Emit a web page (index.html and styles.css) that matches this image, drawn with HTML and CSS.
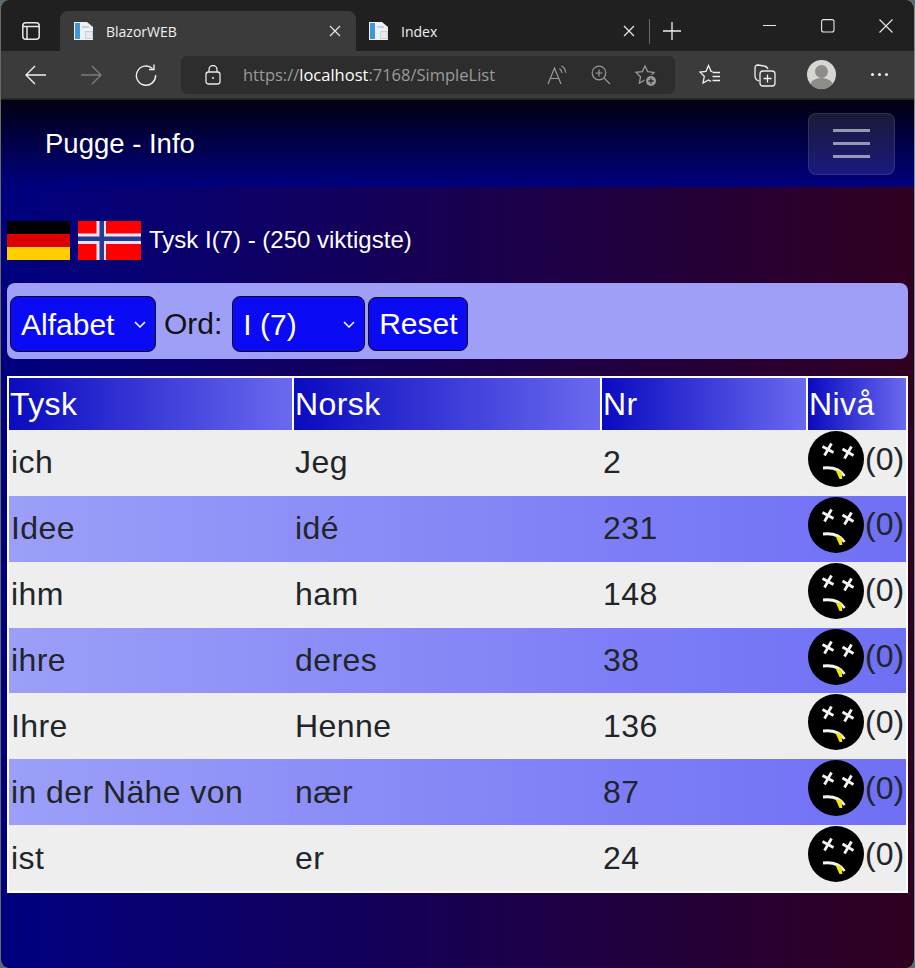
FILE: index.html
```html
<!DOCTYPE html>
<html lang="no">
<head>
<meta charset="utf-8">
<title>BlazorWEB</title>
<link rel="stylesheet" href="styles.css">
</head>
<body>
<svg class="defs" width="0" height="0" aria-hidden="true">
  <symbol id="face" viewBox="0 0 56 56">
    <circle cx="28" cy="28" r="28" fill="#000"/>
    <path d="M14.500 15.500l11 6M23.500 12.500l-7 12M34.500 18l11 6.500M43.500 15.500l-7 12" stroke="#f4f4f4" stroke-width="2.800" fill="none"/>
    <path d="M15 37c9-1 17 1 21.500 8" stroke="#f4f4f4" stroke-width="2.800" fill="none"/>
    <path d="M27.500 39l6 1.500 .8 7.500h-2.800z" fill="#f5e60a"/>
  </symbol>
  <symbol id="page" viewBox="0 0 20 20">
    <path d="M0 1h13l6 5v13H0z" fill="#eef1f6"/>
    <path d="M1 2h5v16H1z" fill="#3f97d6"/>
    <path d="M8 5h7v2H8zM11 10h8v8h-8z" fill="#c9d0dc"/>
    <path d="M12 11h6v6h-6z" fill="#e6eaf0"/>
  </symbol>
</svg>
<div class="window">
  <header class="tabstrip">
    <div class="panebtn">
      <svg width="18" height="18" viewBox="0 0 18 18" fill="none" stroke="#e8e8e8" stroke-width="1.500"><rect x=".8" y=".8" width="16.400" height="16.400" rx="3"/><path d="M1 4.500h16M5 4.500V17"/></svg>
    </div>
    <div class="tab tab-active">
      <svg class="favicon" width="20" height="20"><use href="#page"/></svg>
      <span class="tab-title">BlazorWEB</span>
      <svg class="tab-close" width="12" height="12" viewBox="0 0 12 12" stroke="#e8e8e8" stroke-width="1.200"><path d="M1 1l10 10M11 1L1 11"/></svg>
    </div>
    <div class="tab">
      <svg class="favicon" width="20" height="20"><use href="#page"/></svg>
      <span class="tab-title">Index</span>
      <svg class="tab-close" width="12" height="12" viewBox="0 0 12 12" stroke="#e8e8e8" stroke-width="1.200"><path d="M1 1l10 10M11 1L1 11"/></svg>
    </div>
    <div class="tab-sep"></div>
    <svg class="newtab" width="18" height="18" viewBox="0 0 18 18" stroke="#f0f0f0" stroke-width="1.300"><path d="M9 0v18M0 9h18"/></svg>
    <div class="winctl">
      <svg width="14" height="14" viewBox="0 0 14 14" stroke="#e8e8e8" stroke-width="1.100"><path d="M0 6.500h13"/></svg>
      <svg width="14" height="14" viewBox="0 0 14 14" fill="none" stroke="#e8e8e8" stroke-width="1.100"><rect x=".6" y=".6" width="12.400" height="12.400" rx="2"/></svg>
      <svg width="14" height="14" viewBox="0 0 14 14" stroke="#e8e8e8" stroke-width="1.100"><path d="M.5.5l13 13M13.500.5l-13 13"/></svg>
    </div>
  </header>
  <nav class="toolbar">
    <svg class="tb tb-back" width="22" height="20" viewBox="0 0 22 20" fill="none" stroke="#f0f0f0" stroke-width="1.400"><path d="M21 10H1M10 1l-9 9 9 9"/></svg>
    <svg class="tb tb-fwd" width="22" height="20" viewBox="0 0 22 20" fill="none" stroke="#7c7c7c" stroke-width="1.400"><path d="M1 10h20M12 1l9 9-9 9"/></svg>
    <svg class="tb tb-reload" width="22" height="22" viewBox="0 0 22 22" fill="none" stroke="#f0f0f0" stroke-width="1.400"><path d="M17.500 4.500A9.600 9.600 0 1 0 20.600 11"/><path d="M19 .5v5h-5"/></svg>
    <div class="address">
      <svg class="lock" width="16" height="20" viewBox="0 0 16 20" fill="none" stroke="#e8e8e8" stroke-width="1.300"><rect x="1" y="7" width="14" height="12" rx="2.500"/><path d="M4 7V4.500a4 4 0 0 1 8 0V7"/><circle cx="8" cy="13" r="1" fill="#e8e8e8" stroke="none"/></svg>
      <span class="url">https://<b>localhost</b>:7168/SimpleList</span>
      <svg class="addr-ic ic-read" width="20" height="20" viewBox="0 0 20 20" fill="none" stroke="#9a9a9a" stroke-width="1.200"><path d="M1 19L7.500 3 14 19M3.500 13.500h8M12.500 3.500c1.500 1 2.200 2.500 2.500 4.500M14.500 .8c2.500 1.500 4 4 4.200 7"/></svg>
      <svg class="addr-ic ic-zoom" width="20" height="20" viewBox="0 0 20 20" fill="none" stroke="#9a9a9a" stroke-width="1.200"><circle cx="8" cy="8" r="6.800"/><path d="M13 13l6 6M8 4.500v7M4.500 8h7"/></svg>
      <svg class="addr-ic ic-fav" width="22" height="22" viewBox="0 0 22 22" fill="none" stroke="#9a9a9a" stroke-width="1.300"><path d="M10 2l2.700 5.600 6.300.8-4.500 4.300 1.100 6.300-5.600-3-5.600 3 1.100-6.300L1 8.400l6.300-.8z"/><circle cx="16" cy="17" r="6.500" fill="#2d2d2d" stroke="none"/><circle cx="16" cy="17" r="5" fill="#9a9a9a" stroke="none"/><path d="M16 14.300v5.400M13.300 17h5.400" stroke="#2d2d2d"/></svg>
    </div>
    <svg class="tb tb-favs" width="22" height="22" viewBox="0 0 22 22" fill="none" stroke="#f0f0f0" stroke-width="1.300"><path d="M13.500 7.500L12 7.300 9.500 1.500 7 7.300l-6 .8 4.300 4.200L4 19l5.500-3 2.500 1.300"/><path d="M13.500 8.500H21M13.500 12.500H21M13.500 16.500H21"/></svg>
    <svg class="tb tb-coll" width="22" height="24" viewBox="0 0 22 24" fill="none" stroke="#f0f0f0" stroke-width="1.300"><path d="M5 18C2 17 1 15 1 13V5c0-2 1-3 3-3l6 1c2 0 3 1 4 3"/><rect x="6" y="8" width="15" height="15" rx="3"/><path d="M13.500 11.500v8M9.500 15.500h8"/></svg>
    <div class="avatar"><span class="av-head"></span><span class="av-body"></span></div>
    <div class="more"><i></i><i></i><i></i></div>
  </nav>
  <div class="page">
    <div class="navbar">
      <a class="brand">Pugge - Info</a>
      <button class="toggler" aria-label="Meny"><i></i><i></i><i></i></button>
    </div>
    <main class="content">
      <div class="title">
        <svg class="flag" width="63" height="39" viewBox="0 0 63 39"><rect width="63" height="13" fill="#000"/><rect y="13" width="63" height="13" fill="#dd0000"/><rect y="26" width="63" height="13" fill="#ffce00"/></svg>
        <svg class="flag" width="63" height="39" viewBox="0 0 63 39"><rect width="63" height="39" fill="#ff0000"/><rect x="18.500" width="9.500" height="39" fill="#e4e4f2"/><rect y="12.500" width="63" height="10.500" fill="#e4e4f2"/><rect x="21.500" width="4.500" height="39" fill="#2a3a90"/><rect y="15.500" width="63" height="4.500" fill="#2a3a90"/></svg>
        <span class="title-text">Tysk I(7) - (250 viktigste)</span>
      </div>
      <form class="filters">
        <select class="ctl sel-sort"><option>Alfabet</option></select>
        <label class="ord">Ord:</label>
        <select class="ctl sel-word"><option>I (7)</option></select>
        <button type="button" class="ctl reset">Reset</button>
      </form>
      <table class="words">
        <colgroup><col class="c1"><col class="c2"><col class="c3"><col class="c4"></colgroup>
        <thead><tr><th>Tysk</th><th>Norsk</th><th>Nr</th><th>Nivå</th></tr></thead>
        <tbody>
          <tr><td>ich</td><td>Jeg</td><td>2</td><td><div class="lvl"><svg class="face"><use href="#face"/></svg><span>(0)</span></div></td></tr>
          <tr><td>Idee</td><td>idé</td><td>231</td><td><div class="lvl"><svg class="face"><use href="#face"/></svg><span>(0)</span></div></td></tr>
          <tr><td>ihm</td><td>ham</td><td>148</td><td><div class="lvl"><svg class="face"><use href="#face"/></svg><span>(0)</span></div></td></tr>
          <tr><td>ihre</td><td>deres</td><td>38</td><td><div class="lvl"><svg class="face"><use href="#face"/></svg><span>(0)</span></div></td></tr>
          <tr><td>Ihre</td><td>Henne</td><td>136</td><td><div class="lvl"><svg class="face"><use href="#face"/></svg><span>(0)</span></div></td></tr>
          <tr><td>in der Nähe von</td><td>nær</td><td>87</td><td><div class="lvl"><svg class="face"><use href="#face"/></svg><span>(0)</span></div></td></tr>
          <tr><td>ist</td><td>er</td><td>24</td><td><div class="lvl"><svg class="face"><use href="#face"/></svg><span>(0)</span></div></td></tr>
        </tbody>
      </table>
    </main>
  </div>
</div>
</body>
</html>
```
FILE: styles.css
```css
* { box-sizing: border-box; }
html, body { margin: 0; height: 100%; overflow: hidden; background: #5a6a70; }
body { font-family: "Liberation Sans", Arial, sans-serif; }
.defs { display: block; height: 0; }
.window { height: 968px; width: 915px; display: flex; flex-direction: column; border-radius: 9px; overflow: hidden; border-left: 1px solid #6b6b60; border-right: 1px solid #8a8a8a; }

.tabstrip { height: 51px; flex: none; background: #202020; display: flex; align-items: flex-end; color: #f0f0f0; font-family: "Open Sans", sans-serif; }
.panebtn { width: 59px; height: 40px; display: flex; align-items: center; justify-content: center; }
.tab { width: 296px; height: 40px; display: flex; align-items: center; padding: 0 15px 0 14px; font-size: 14px; border-radius: 8px 8px 0 0; }
.tab-active { background: #3b3b3b; }
.tab + .tab { width: 284px; padding-left: 13px; padding-right: 5px; }
.favicon { flex: none; }
.tab-title { margin-left: 12px; flex: 1; }
.tab-close { flex: none; }
.tab-sep { width: 1px; height: 25px; background: #6a6a6a; margin: 0 0 7px 9px; }
.newtab { margin: 0 0 11px 13px; flex: none; }
.winctl { margin-left: auto; align-self: flex-start; display: flex; gap: 44px; padding: 19px 21px 0 0; }

.toolbar { height: 48px; flex: none; background: #3b3b3b; display: flex; align-items: center; border-bottom: 1px solid #2c2c2c; }
.tb { flex: none; }
.tb-back { margin-left: 24px; }
.tb-fwd { margin-left: 33px; }
.tb-reload { margin-left: 33px; }
.address { margin-left: 24px; width: 494px; height: 38px; background: #2d2d2d; border-radius: 6px; display: flex; align-items: center; padding-left: 24px; color: #999; }
.lock { flex: none; }
.url { margin-left: 22px; font: 16.500px "Open Sans", sans-serif; color: #9b9b9b; flex: 1; }
.url b { font-weight: 400; color: #fff; }
.addr-ic { flex: none; }
.ic-zoom { margin-left: 24px; }
.ic-fav { margin: 0 18px 0 24px; }
.tb-favs { margin-left: 24px; }
.tb-coll { margin-left: 33px; }
.avatar { margin-left: 31px; width: 29px; height: 29px; border-radius: 50%; background: #d8d6d2; position: relative; overflow: hidden; flex: none; }
.av-head { position: absolute; left: 8px; top: 5px; width: 13px; height: 13px; border-radius: 50%; background: #8e8c88; }
.av-body { position: absolute; left: 3px; top: 18px; width: 23px; height: 16px; border-radius: 50%; background: #8e8c88; }
.more { margin-left: 35px; display: flex; gap: 4px; }
.more i { width: 3px; height: 3px; border-radius: 50%; background: #f0f0f0; }

.page { flex: 1; display: flex; flex-direction: column; background: linear-gradient(to right, #000080, #300020); border-top: 1px solid #222; }
.navbar { height: 87px; flex: none; background: linear-gradient(#020010, #000080); display: flex; align-items: center; justify-content: space-between; padding: 0 19px 0 44px; }
.brand { color: #fff; font-size: 27.500px; }
.toggler { width: 87px; height: 62px; padding: 0; background: rgba(255,255,255,.1); border: 1px solid rgba(255,255,255,.1); border-radius: 8px; display: flex; flex-direction: column; align-items: center; justify-content: center; gap: 10px; }
.toggler i { width: 37px; height: 3px; background: rgba(255,255,255,.55); }

.content { padding: 34px 6px 0; }
.title { display: flex; align-items: center; gap: 8px; color: #fff; font-size: 24px; height: 39px; }
.title-text { margin-bottom: 2px; }
.flag { flex: none; }
.filters { margin-top: 23px; height: 76px; background: #9f9ff8; border-radius: 8px; display: flex; align-items: center; padding: 6px 0 0 3px; }
.ctl { font: 30px "Liberation Sans", sans-serif; color: #fff; background-color: #0a0af5; border: 1px solid #111; border-radius: 8px; }
select.ctl { appearance: none; background-image: url("data:image/svg+xml,%3Csvg xmlns='http://www.w3.org/2000/svg' width='12' height='7' viewBox='0 0 12 7'%3E%3Cpath d='M1 1l5 5 5-5' fill='none' stroke='%23fff' stroke-width='1.500'/%3E%3C/svg%3E"); background-repeat: no-repeat; background-position: right 9px center; padding-left: 10px; }
.sel-sort { width: 146px; height: 56px; }
.ord { font-size: 30px; color: #111; margin: 0 10px 0 8px; }
.sel-word { width: 133px; height: 56px; }
.reset { width: 100px; height: 54px; margin-left: 3px; padding: 0; }

.words { margin-top: 17px; width: 901px; table-layout: fixed; border-collapse: separate; border-spacing: 0; border: 2px solid #fff; background: #eee; color: #212529; font-size: 32px; letter-spacing: .42px; }
.c1 { width: 283px; } .c2 { width: 308px; } .c3 { width: 206px; } .c4 { width: 100px; }
th { height: 52px; padding: 0 1px; text-align: left; font-weight: 400; color: #fff; background: linear-gradient(to right, #0a0ac0, #6a6af0); border-left: 2px solid #fff; }
th:first-child { border-left: 0; }
td { height: 65.860px; padding: 0 2px; vertical-align: middle; }
td:nth-child(2), td:nth-child(3) { padding-left: 3px; }
td:last-child { padding: 0 0 0 2px; vertical-align: top; }
tbody tr:nth-child(even) { background: linear-gradient(to right, #9c9ff8, #6f6ff5); }
.lvl { display: flex; align-items: center; height: 58px; }
.face { width: 56px; height: 56px; flex: none; }
.lvl span { margin-left: 1px; letter-spacing: 0; }
```
